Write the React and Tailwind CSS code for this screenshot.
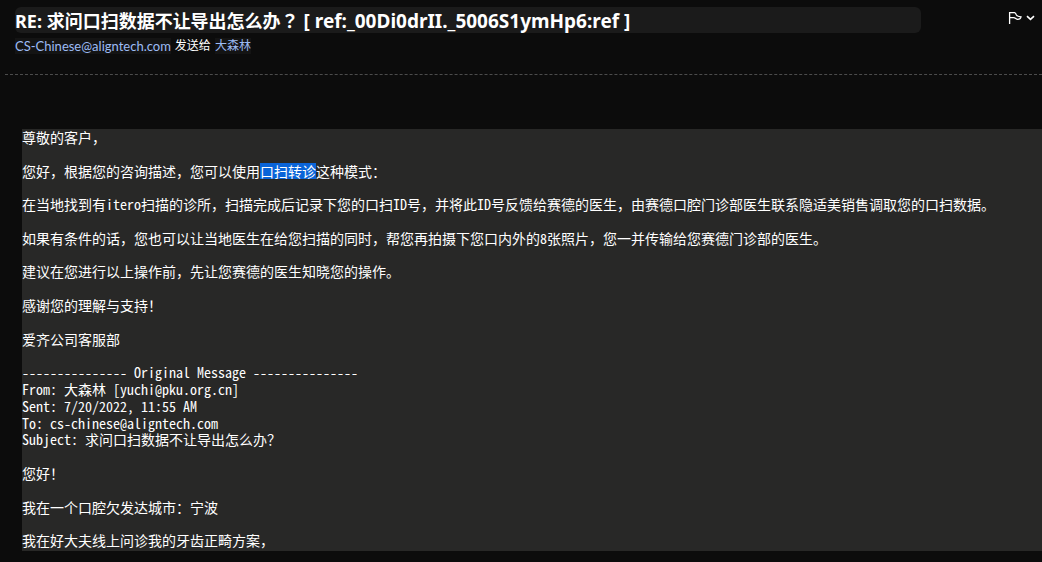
import React from 'react';

const paragraphs = [
  '在当地找到有itero扫描的诊所，扫描完成后记录下您的口扫ID号，并将此ID号反馈给赛德的医生，由赛德口腔门诊部医生联系隐适美销售调取您的口扫数据。',
  '如果有条件的话，您也可以让当地医生在给您扫描的同时，帮您再拍摄下您口内外的8张照片，您一并传输给您赛德门诊部的医生。',
  '建议在您进行以上操作前，先让您赛德的医生知晓您的操作。',
  '感谢您的理解与支持！',
  '爱齐公司客服部',
];

const originalHeaders = [
  '--------------- Original Message ---------------',
  'From: 大森林 [yuchi@pku.org.cn]',
  'Sent: 7/20/2022, 11:55 AM',
  'To: cs-chinese@aligntech.com',
  'Subject: 求问口扫数据不让导出怎么办？',
];

const originalParagraphs = [
  '您好！',
  '我在一个口腔欠发达城市：宁波',
  '我在好大夫线上问诊我的牙齿正畸方案，',
];

const FlagMenu = () => (
  <button type="button" aria-label="Flag" className="flex items-center gap-1 py-[5px] text-white">
    <svg width="14" height="12" viewBox="0 0 14 12" fill="none" stroke="currentColor" strokeWidth="1.3">
      <path d="M1.6 12V0.6H6.2C7.6 0.6 7.8 1.6 8.4 3C9 4.2 10.2 4.6 13 4.9C12.6 6.8 11.4 7.4 9.8 7.4C7.8 7.4 7.6 5.6 5.6 5.6H1.6" />
    </svg>
    <svg width="9" height="6" viewBox="0 0 9 6" fill="none" stroke="currentColor" strokeWidth="1.6">
      <path d="M1 1.2L4.5 4.4L8 1.2" />
    </svg>
  </button>
);

const App = () => {
  return (
    <div className="min-h-screen bg-[#0c0c0c] text-white">
      <header className="ml-[5px] border-b border-dashed border-[#4c4c4c] pt-[7px] pb-5 pl-[10px] pr-[7px] font-['Noto_Sans','Noto_Sans_CJK_SC',sans-serif]">
        <div className="flex items-start">
          <h1 className="h-[26px] flex-1 rounded-md bg-[#1b1b1b] text-[18px] leading-[26px] font-bold whitespace-nowrap">
            RE: 求问口扫数据不让导出怎么办<span className="font-['Noto_Sans_CJK_TC',sans-serif]">？</span>
            <span className="text-[19px]"> [ ref:_00Di0drII._5006S1ymHp6:ref ]</span>
          </h1>
          <div className="flex w-[114px] justify-end">
            <FlagMenu />
          </div>
        </div>
        <div className="mt-[5px] flex gap-1 font-['Lato','Noto_Sans_CJK_SC',sans-serif] text-[12px] leading-4">
          <a href="mailto:CS-Chinese@aligntech.com" className="bg-[#141414] text-[13px] text-[#9dbcf5]">CS-Chinese@aligntech.com</a>
          <span>发送给</span>
          <a href="mailto:yuchi@pku.org.cn" className="bg-[#141414] text-[#9dbcf5]">大森林</a>
        </div>
      </header>

      <main className="mt-[54px] ml-[22px] flex flex-col gap-[1.2em] bg-[#282827] pb-[2px] font-['Noto_Sans_Mono_CJK_SC','Noto_Sans_CJK_SC',monospace] text-[14px] leading-[1.2]">
        <p>尊敬的客户，</p>
        <p>
          您好，根据您的咨询描述，您可以使用<mark className="inline-block bg-[#0a64d8] text-white">口扫转诊</mark>这种模式：
        </p>
        {paragraphs.map((text) => (
          <p key={text}>{text}</p>
        ))}
        <div>
          {originalHeaders.map((line) => (
            <p key={line}>{line}</p>
          ))}
        </div>
        {originalParagraphs.map((text) => (
          <p key={text}>{text}</p>
        ))}
      </main>
    </div>
  );
};

export default App;
